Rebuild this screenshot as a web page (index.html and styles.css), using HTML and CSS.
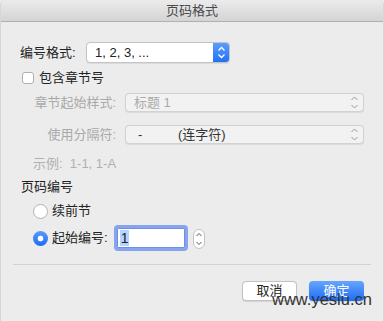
FILE: index.html
```html
<!DOCTYPE html>
<html>
<head>
<meta charset="utf-8">
<link rel="stylesheet" href="styles.css">
</head>
<body>
<div class="window">
  <div class="titlebar">页码格式</div>
  <div class="content">
    <div class="row r1">
      <span class="lbl">编号格式:</span>
      <div class="popup primary">
        <span class="val">1, 2, 3, ...</span>
        <span class="arrows blue">
          <svg width="17" height="21" viewBox="0 0 17 21"><path d="M5.5 8.5 L8.5 5.5 L11.5 8.5 M5.5 12.5 L8.5 15.5 L11.5 12.5" fill="none" stroke="#fff" stroke-width="1.4"/></svg>
        </span>
      </div>
    </div>
    <div class="row r2">
      <span class="checkbox"></span>
      <span class="text">包含章节号</span>
    </div>
    <div class="row r3 disabled">
      <span class="lbl2">章节起始样式:</span>
      <div class="popup gray">
        <span class="val">标题 1</span>
        <span class="arrows">
          <svg width="12" height="19" viewBox="0 0 12 19"><path d="M3.5 7 L6.5 4 L9.5 7 M3.5 12 L6.5 15 L9.5 12" fill="none" stroke="#9a9a9a" stroke-width="1"/></svg>
        </span>
      </div>
    </div>
    <div class="row r4 disabled">
      <span class="lbl2">使用分隔符:</span>
      <div class="popup gray">
        <span class="val"><span class="dash">-</span><span class="dark">(连字符)</span></span>
        <span class="arrows">
          <svg width="12" height="19" viewBox="0 0 12 19"><path d="M3.5 7 L6.5 4 L9.5 7 M3.5 12 L6.5 15 L9.5 12" fill="none" stroke="#9a9a9a" stroke-width="1"/></svg>
        </span>
      </div>
    </div>
    <div class="example">示例:&nbsp; 1-1, 1-A</div>
    <div class="section">页码编号</div>
    <div class="row r6">
      <span class="radio"></span>
      <span class="text">续前节</span>
    </div>
    <div class="row r7">
      <span class="radio on"></span>
      <span class="text">起始编号:</span>
      <div class="field"><span class="sel">1</span></div>
      <span class="stepper">
        <svg width="12" height="20" viewBox="0 0 12 20"><path d="M3.5 7 L6 4.5 L8.5 7 M3.5 13 L6 15.5 L8.5 13" fill="none" stroke="#555" stroke-width="1"/></svg>
      </span>
    </div>
  </div>
  <div class="divider"></div>
  <div class="buttons">
    <button class="btn">取消</button>
    <button class="btn default">确定</button>
  </div>
  <div class="watermark">www.yeslu.cn</div>
</div>
</body>
</html>
```
FILE: styles.css
```css
html, body {
  margin: 0;
  padding: 0;
  background: #ececec;
}
.window {
  position: relative;
  width: 384px;
  height: 321px;
  background: #ececec;
  font-family: "Liberation Sans", "Noto Sans CJK SC", sans-serif;
  font-size: 13px;
  color: #222;
  overflow: hidden;
  box-sizing: border-box;
  border-left: 1px solid #d6d6d6;
  border-right: 1px solid #d6d6d6;
  border-radius: 5px 5px 0 0;
}
.titlebar {
  height: 21px;
  line-height: 21px;
  text-align: center;
  color: #4a4a4a;
  font-size: 13px;
  background: linear-gradient(#ebebeb, #d4d4d4);
  border-bottom: 1px solid #b0b0b0;
}
.content {
  padding-left: 19px;
  display: flex;
  flex-direction: column;
}
.row {
  display: flex;
  align-items: center;
}
.r1 { margin-top: 20px; height: 21px; }
.lbl { width: 66px; line-height: 16px; }
.popup {
  display: flex;
  align-items: center;
  justify-content: space-between;
  background: #fff;
  box-sizing: border-box;
  border: 1px solid #c6c6c6;
  border-radius: 4px;
  box-shadow: 0 0.5px 1px rgba(0,0,0,0.08);
}
.primary {
  width: 144px;
  height: 21px;
  border-color: #c4c4c4;
  overflow: hidden;
}
.primary .val { padding-left: 8px; line-height: 16px; }
.arrows { display: flex; }
.arrows.blue {
  width: 17px;
  height: 21px;
  margin: -1px -1px -1px 0;
  background: linear-gradient(#5e9ffb, #1e6ff6);
}
.r2 { margin-top: 8px; height: 14px; }
.checkbox {
  width: 12px;
  height: 12px;
  margin-left: 2px;
  box-sizing: border-box;
  background: #fff;
  border: 1px solid #b0b0b0;
  border-radius: 3px;
}
.r2 .text { margin-left: 5px; line-height: 16px; }
.r3 { margin-top: 8px; height: 19px; }
.r4 { margin-top: 13px; height: 19px; }
.lbl2 {
  width: 96px;
  text-align: right;
  margin-right: 9px;
  color: #a9a9a9;
  line-height: 16px;
}
.gray {
  width: 239px;
  height: 19px;
  background: #f2f2f2;
  border-color: #d2d2d2;
}
.gray .val {
  padding-left: 8px;
  color: #aaa;
  line-height: 16px;
  display: flex;
}
.gray .arrows { margin-right: 3px; }
.dash { width: 40px; padding-left: 4px; color: #333; }
.dark { color: #333; }
.example {
  margin-top: 12px;
  height: 16px;
  line-height: 16px;
  padding-left: 13px;
  color: #b0b0b0;
}
.section {
  margin-top: 7px;
  height: 16px;
  line-height: 16px;
  padding-left: 1px;
}
.r6 { margin-top: 8px; height: 16px; padding-left: 13px; }
.r7 { margin-top: 6px; height: 26px; padding-left: 13px; }
.radio {
  width: 15px;
  height: 15px;
  box-sizing: border-box;
  border-radius: 50%;
  background: #fff;
  border: 1px solid #b3b3b3;
  flex: none;
}
.radio.on {
  border: none;
  background: radial-gradient(circle, #fff 0, #fff 2.6px, transparent 3.2px), linear-gradient(#5a9cfa, #1c6bf4);
}
.r6 .text, .r7 .text { margin-left: 4px; line-height: 16px; }
.field {
  margin-left: 6px;
  width: 74px;
  height: 26px;
  box-sizing: border-box;
  border: 3px solid #87a4ef;
  border-radius: 4px;
  background: #fff;
  display: flex;
  align-items: center;
  padding-left: 3px;
  box-shadow: inset 0 0 0 1px #6f8fe6;
}
.sel {
  background: #b4d3ff;
  line-height: 16px;
  font-size: 14px;
  padding: 0 1px;
}
.stepper {
  margin-left: 5px;
  margin-top: 2px;
  width: 12px;
  height: 20px;
  box-sizing: border-box;
  border: 1px solid #c3c3c3;
  border-radius: 6px;
  background: #fff;
  display: flex;
  align-items: center;
  justify-content: center;
}
.stepper svg { flex: none; }
.divider {
  margin: 13px 12px 0 12px;
  height: 1px;
  background: #d2d2d2;
}
.buttons {
  margin-top: 16px;
  display: flex;
  justify-content: flex-end;
  gap: 12px;
  padding-right: 19px;
}
.btn {
  width: 55px;
  height: 20px;
  padding: 0;
  font-family: "Liberation Sans", "Noto Sans CJK SC", sans-serif;
  font-size: 13px;
  line-height: 16px;
  color: #222;
  background: #fff;
  border: 1px solid #c2c2c2;
  border-radius: 4px;
  box-shadow: 0 0.5px 1px rgba(0,0,0,0.1);
}
.btn.default {
  color: #fff;
  border: none;
  background: linear-gradient(#66a6fb, #1d6cf6);
}
.watermark {
  position: absolute;
  left: 271px;
  top: 291px;
  font-family: "Liberation Sans", sans-serif;
  font-size: 16.5px;
  line-height: 1;
  color: #333;
}
```
